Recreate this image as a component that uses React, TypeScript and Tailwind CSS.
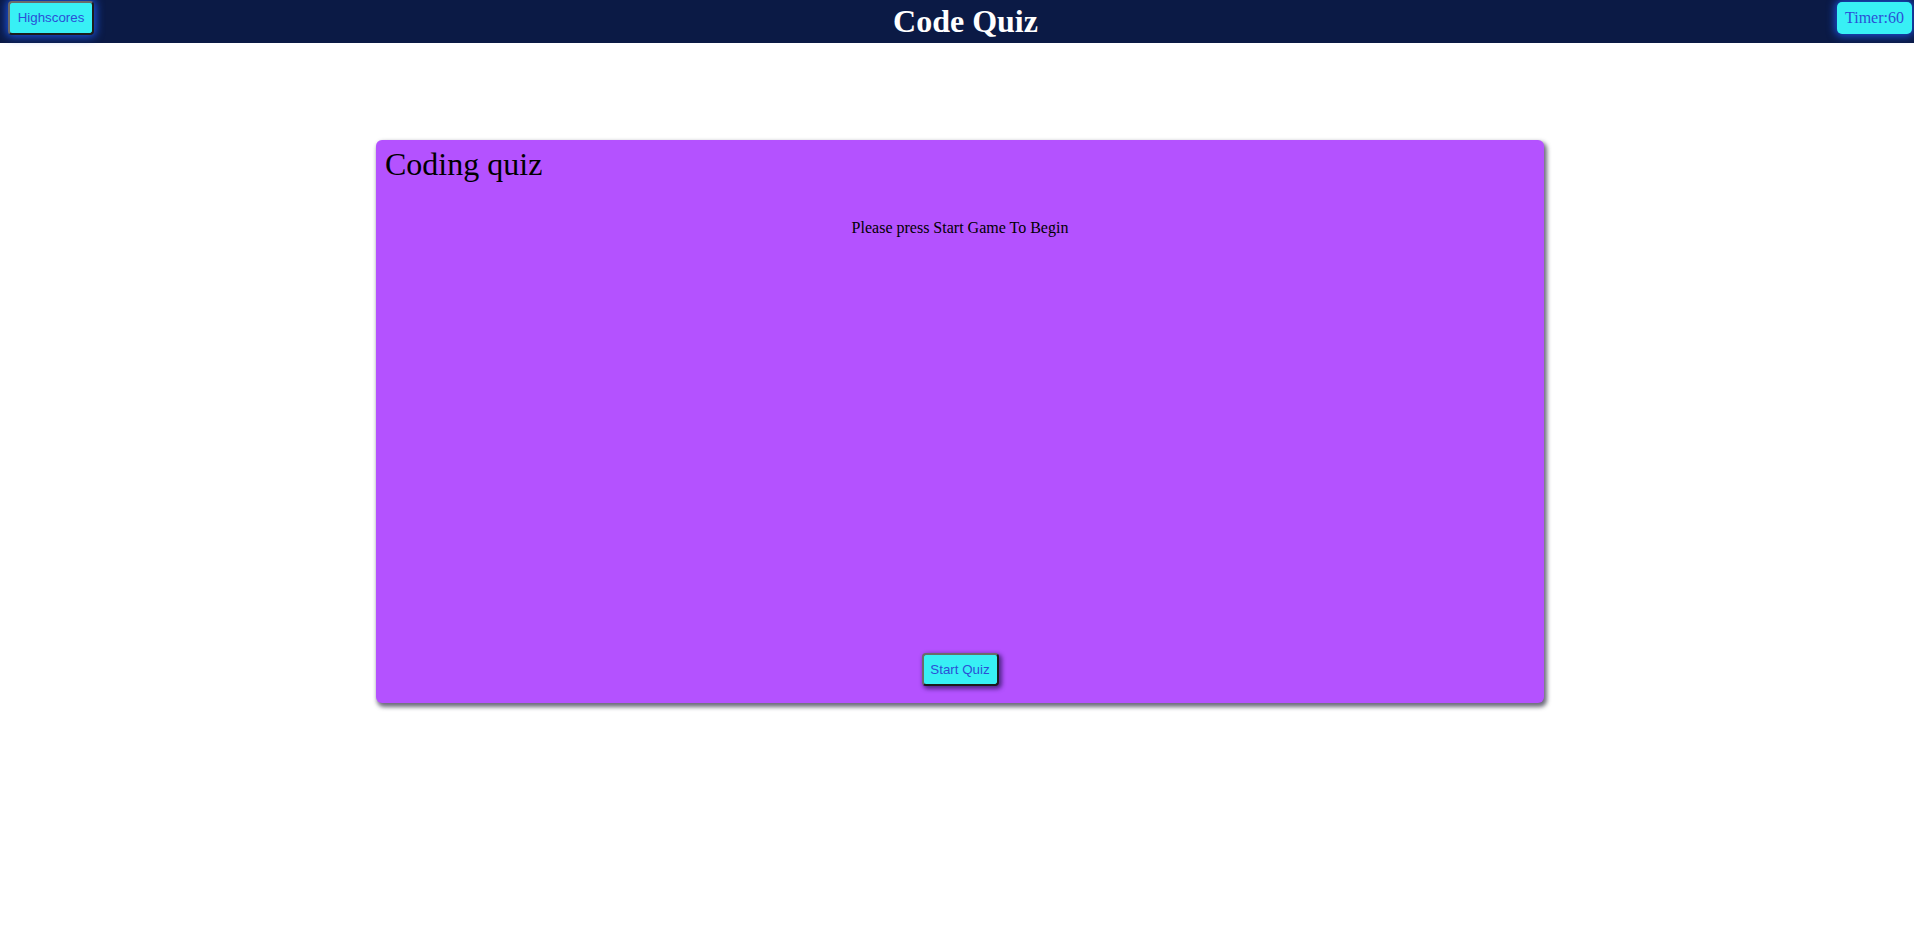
import React from "react";

export default function App() {
  return (
    <div className="min-h-[947px] bg-white" style={{ fontFamily: '"Liberation Serif", "Times New Roman", serif' }}>
      <header className="flex h-[43px] items-start justify-between bg-[#0b1a45]">
        <button
          className="ml-[8px] mt-[1px] h-[34px] w-[86px] rounded-[4px] border-2 border-t-[#6b6b6b] border-l-[#6b6b6b] border-b-[#1c1c1c] border-r-[#1c1c1c] bg-[#38f0f5] text-[13.33px] text-[#2b4fd6] shadow-[0_0_8px_2px_#1a4fd6]"
          style={{ fontFamily: '"Liberation Sans", Arial, sans-serif' }}
        >
          Highscores
        </button>
        <h1 className="mt-[1px] text-[32px] font-bold leading-[40px] text-white">
          Code Quiz
        </h1>
        <div className="mr-[2px] mt-[2px] flex h-[32px] w-[75px] items-center justify-center rounded-[5px] bg-[#38f0f5] text-[16px] text-[#2b4fd6] shadow-[0_0_8px_2px_#1a4fd6]">
          Timer:60
        </div>
      </header>
      <main className="flex justify-center pt-[97px]">
        <div className="ml-[6px] flex h-[563px] w-[1168px] flex-col rounded-[6px] bg-[#b452ff] shadow-[2px_3px_4px_1px_rgba(60,60,80,0.75)]">
          <h2 className="pl-[9px] pt-[6px] text-[32px] leading-[37px] text-black">Coding quiz</h2>
          <p className="mt-[36px] text-center text-[16px] leading-[18px] text-black">Please press Start Game To Begin</p>
          <div className="flex-1" />
          <div className="flex justify-center pb-[17px]">
            <button
              className="h-[33px] w-[77px] rounded-[4px] border-2 border-t-[#6b6b6b] border-l-[#6b6b6b] border-b-[#1c1c1c] border-r-[#1c1c1c] bg-[#38f0f5] text-[13.33px] text-[#2b4fd6] shadow-[2px_2px_4px_1px_rgba(40,20,90,0.7)]"
              style={{ fontFamily: '"Liberation Sans", Arial, sans-serif' }}
            >
              Start Quiz
            </button>
          </div>
        </div>
      </main>
    </div>
  );
}
